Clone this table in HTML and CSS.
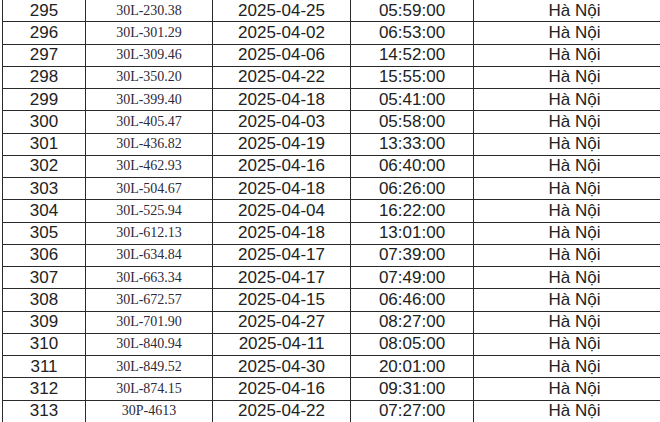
FILE: index.html
```html
<!DOCTYPE html>
<html lang="vi">
<head>
<meta charset="utf-8">
<link rel="stylesheet" href="styles.css">
</head>
<body>
<table class="grid">
<colgroup>
<col class="c-no"><col class="c-plate"><col class="c-date"><col class="c-time"><col class="c-city">
</colgroup>
<tbody>
<tr><td>295</td><td class="plate">30L-230.38</td><td>2025-04-25</td><td>05:59:00</td><td>Hà Nội</td></tr>
<tr><td>296</td><td class="plate">30L-301.29</td><td>2025-04-02</td><td>06:53:00</td><td>Hà Nội</td></tr>
<tr><td>297</td><td class="plate">30L-309.46</td><td>2025-04-06</td><td>14:52:00</td><td>Hà Nội</td></tr>
<tr><td>298</td><td class="plate">30L-350.20</td><td>2025-04-22</td><td>15:55:00</td><td>Hà Nội</td></tr>
<tr><td>299</td><td class="plate">30L-399.40</td><td>2025-04-18</td><td>05:41:00</td><td>Hà Nội</td></tr>
<tr><td>300</td><td class="plate">30L-405.47</td><td>2025-04-03</td><td>05:58:00</td><td>Hà Nội</td></tr>
<tr><td>301</td><td class="plate">30L-436.82</td><td>2025-04-19</td><td>13:33:00</td><td>Hà Nội</td></tr>
<tr><td>302</td><td class="plate">30L-462.93</td><td>2025-04-16</td><td>06:40:00</td><td>Hà Nội</td></tr>
<tr><td>303</td><td class="plate">30L-504.67</td><td>2025-04-18</td><td>06:26:00</td><td>Hà Nội</td></tr>
<tr><td>304</td><td class="plate">30L-525.94</td><td>2025-04-04</td><td>16:22:00</td><td>Hà Nội</td></tr>
<tr><td>305</td><td class="plate">30L-612.13</td><td>2025-04-18</td><td>13:01:00</td><td>Hà Nội</td></tr>
<tr><td>306</td><td class="plate">30L-634.84</td><td>2025-04-17</td><td>07:39:00</td><td>Hà Nội</td></tr>
<tr><td>307</td><td class="plate">30L-663.34</td><td>2025-04-17</td><td>07:49:00</td><td>Hà Nội</td></tr>
<tr><td>308</td><td class="plate">30L-672.57</td><td>2025-04-15</td><td>06:46:00</td><td>Hà Nội</td></tr>
<tr><td>309</td><td class="plate">30L-701.90</td><td>2025-04-27</td><td>08:27:00</td><td>Hà Nội</td></tr>
<tr><td>310</td><td class="plate">30L-840.94</td><td>2025-04-11</td><td>08:05:00</td><td>Hà Nội</td></tr>
<tr><td>311</td><td class="plate">30L-849.52</td><td>2025-04-30</td><td>20:01:00</td><td>Hà Nội</td></tr>
<tr><td>312</td><td class="plate">30L-874.15</td><td>2025-04-16</td><td>09:31:00</td><td>Hà Nội</td></tr>
<tr><td>313</td><td class="plate">30P-4613</td><td>2025-04-22</td><td>07:27:00</td><td>Hà Nội</td></tr>
</tbody>
</table>
</body>
</html>
```
FILE: styles.css
```css
html, body {
  margin: 0;
  padding: 0;
  background: #ffffff;
  overflow: hidden;
}
.grid {
  border-collapse: collapse;
  table-layout: fixed;
  width: 673px;
  margin: -1px 0 0 2px;
  font-family: "Liberation Sans", Arial, sans-serif;
  font-size: 17px;
  color: #222222;
}
.c-no { width: 83px; }
.c-plate { width: 127px; }
.c-date { width: 138px; }
.c-time { width: 123px; }
.c-city { width: 202px; }
.grid td {
  border: 1px solid #2a2a2a;
  height: 21.25px;
  padding: 0;
  text-align: center;
  vertical-align: middle;
  line-height: 20px;
  white-space: nowrap;
}
.grid td.plate {
  font-family: "Liberation Serif", "Times New Roman", serif;
  font-size: 14px;
  color: #2e2a3a;
}
```
